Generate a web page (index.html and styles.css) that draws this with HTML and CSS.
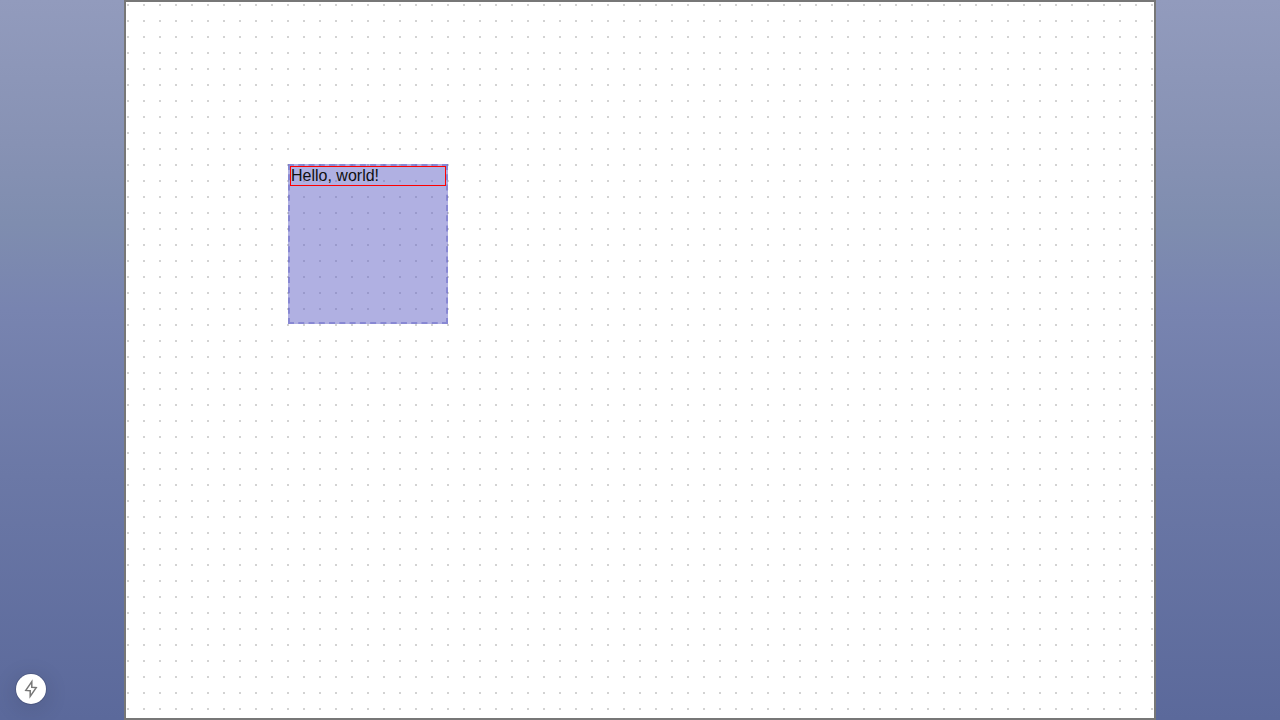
FILE: index.html
```html
<!DOCTYPE html>
<html lang="en">
<head>
<meta charset="utf-8">
<title>Canvas editor</title>
<link rel="stylesheet" href="styles.css">
</head>
<body>
<main class="workspace">
  <section class="canvas" aria-label="Canvas">
    <div class="node">
      <div class="node-text">Hello, world!</div>
    </div>
  </section>
</main>
<button class="quick-action" type="button" aria-label="Quick actions">
  <svg class="bolt" viewBox="0 0 16 20" aria-hidden="true">
    <path d="M8.8 2.6 L2.8 11.4 L7.2 11.8 L7.2 17.4 L13.2 8.6 L8.8 8.2 Z"/>
  </svg>
</button>
</body>
</html>
```

FILE: styles.css
```css
* {
  box-sizing: border-box;
}

body {
  margin: 0;
  font: 16px/18px "Liberation Sans", Arial, sans-serif;
  color: #111;
}

.workspace {
  display: flex;
  min-height: 100vh;
  padding: 0 124px;
  background: linear-gradient(#929bbd 0%, #8792b4 20%, #7f8daf 31%, #7884b0 43%, #6b78a6 66%, #5b699b 100%);
}

.canvas {
  position: relative;
  flex: 1;
  border: 2px solid #777;
  background-color: #fff;
  background-image: url("data:image/svg+xml,%3Csvg xmlns='http://www.w3.org/2000/svg' width='16' height='16'%3E%3Crect x='1' y='2' width='2' height='2' fill='%23d3d3d3'/%3E%3C/svg%3E");
  background-size: 16px 16px;
}

.node {
  position: absolute;
  left: 162px;
  top: 162px;
  width: 160px;
  height: 160px;
  border: 2px dashed rgba(97, 97, 197, 0.5);
  background: rgba(97, 97, 197, 0.5);
}

.node-text {
  border: 1px solid #f00;
}

.quick-action {
  position: fixed;
  left: 16px;
  bottom: 16px;
  display: flex;
  align-items: center;
  justify-content: center;
  width: 30px;
  height: 30px;
  padding: 0;
  border: 0;
  border-radius: 50%;
  background: #fff;
  box-shadow: 0 0 0 1px rgba(0, 0, 0, 0.12), 0 4px 24px rgba(0, 0, 0, 0.14);
}

.bolt {
  width: 16px;
  height: 20px;
  fill: none;
  stroke: #777;
  stroke-width: 1.5;
}
```
